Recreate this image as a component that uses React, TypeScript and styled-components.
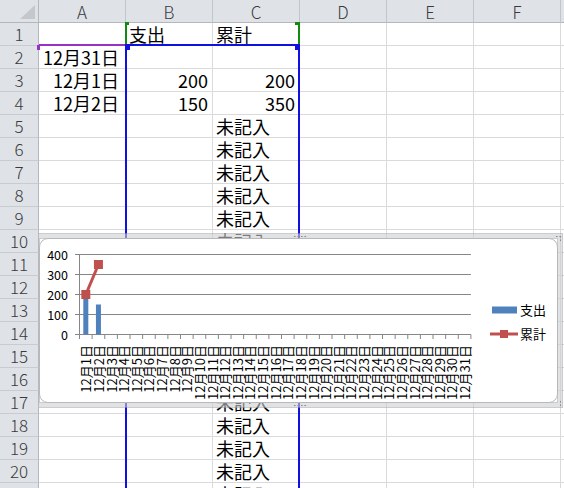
import React from "react";
import styled, { createGlobalStyle } from "styled-components";

const Global = createGlobalStyle`
  html, body { margin: 0; padding: 0; background: #fff; overflow: hidden; }
  #root { width: 564px; height: 488px; }
`;

const COL_W = 87;
const ROW_H = 23;
const HEAD_W = 39;
const COLS = ["A", "B", "C", "D", "E", "F", "G"];
const ROWS = 21;
const FONT = `"Noto Sans CJK JP", "Noto Sans", sans-serif`;

type CellData = { text: string; align: "left" | "right"; pad?: number };
const cells: Record<string, CellData> = {
  B1: { text: "支出", align: "left" },
  C1: { text: "累計", align: "left" },
  A2: { text: "12月31日", align: "right", pad: 6 },
  A3: { text: "12月1日", align: "right", pad: 6 },
  B3: { text: "200", align: "right" },
  C3: { text: "200", align: "right" },
  A4: { text: "12月2日", align: "right", pad: 6 },
  B4: { text: "150", align: "right" },
  C4: { text: "350", align: "right" },
};
for (let r = 5; r <= ROWS; r++) cells["C" + r] = { text: "未記入", align: "left" };

const Sheet = styled.div`
  position: relative;
  width: 564px;
  height: 488px;
  overflow: hidden;
  font-family: ${FONT};
  background: #fff;
`;

const Grid = styled.div`
  display: grid;
  grid-template-columns: ${HEAD_W}px repeat(${COLS.length}, ${COL_W}px);
  grid-auto-rows: ${ROW_H}px;
`;

const HeadBase = styled.div`
  box-sizing: border-box;
  background: #dfe3e8;
  color: #3a3a3a;
  font-weight: 300;
  font-size: 17px;
  line-height: 20px;
  display: flex;
  align-items: center;
  justify-content: center;
`;

const Corner = styled(HeadBase)`
  position: relative;
  border-right: 1px solid #b3b8bd;
  border-bottom: 1px solid #b3b8bd;
`;

const SelectAll = styled.span`
  position: absolute;
  right: 3px;
  bottom: 3px;
  width: 15px;
  height: 14px;
  background: #c4c8cd;
  clip-path: polygon(100% 0, 100% 100%, 0 100%);
`;

const ColHead = styled(HeadBase)`
  border-right: 1px solid #c2c6cb;
  border-bottom: 1px solid #b3b8bd;
  padding-top: 1px;
`;

const RowHead = styled(HeadBase)`
  border-right: 1px solid #b3b8bd;
  border-bottom: 1px solid #c8ccd1;
`;

const Cell = styled.div<{ $align: "left" | "right"; $pad: number }>`
  box-sizing: border-box;
  display: flex;
  align-items: flex-end;
  justify-content: ${(p) => (p.$align === "right" ? "flex-end" : "flex-start")};
  border-right: 1px solid #dadada;
  border-bottom: 1px solid #dadada;
  font-size: 18px;
  line-height: 20px;
  color: #000;
  white-space: nowrap;
  padding: 0 ${(p) => p.$pad}px 1px;
`;

/* chart data range finder (lies over the cells) */
const BLUE = "#1010e0";
const GREEN = "#108a10";
const PURPLE = "#9a2fc8";

const Range = styled.div<{
  $c: string;
  $x: number;
  $y: number;
  $w: number;
  $h: number;
  $sides: string;
}>`
  position: absolute;
  left: ${(p) => p.$x}px;
  top: ${(p) => p.$y}px;
  width: ${(p) => p.$w}px;
  height: ${(p) => p.$h}px;
  box-sizing: border-box;
  border: 0 solid ${(p) => p.$c};
  border-width: ${(p) => p.$sides};
`;

const Handle = styled.span<{ $c: string; $side: "left" | "right"; $top: number; $w: number; $h: number }>`
  position: absolute;
  top: ${(p) => p.$top}px;
  ${(p) => p.$side}: -2px;
  width: ${(p) => p.$w}px;
  height: ${(p) => p.$h}px;
  background: ${(p) => p.$c};
`;

/* chart */
const ChartLayer = styled.div`
  position: absolute;
  left: 39px;
  top: 23px;
  right: 0;
  bottom: 0;
  overflow: hidden;
  pointer-events: none;
`;

const Frame = styled.div`
  position: absolute;
  left: -4px;
  top: 211px;
  width: 527px;
  height: 173px;
  box-sizing: border-box;
  border: 4px solid rgba(205, 207, 210, 0.6);
  box-shadow: 0 0 0 1px rgba(160, 162, 165, 0.55), inset 0 0 0 1px rgba(160, 162, 165, 0.55);
`;

const Grip = styled.span<{ $w: number; $h: number; $x: number; $y: number }>`
  position: absolute;
  left: ${(p) => p.$x}px;
  top: ${(p) => p.$y}px;
  width: ${(p) => p.$w}px;
  height: ${(p) => p.$h}px;
  background-image: radial-gradient(circle, #8c8c8c 0.8px, transparent 1.1px);
  background-size: 3.5px 3.5px;
`;

const ChartBox = styled.div`
  box-sizing: border-box;
  width: 100%;
  height: 100%;
  background: #fff;
  border: 1px solid #b8b8b8;
  border-radius: 9px;
  display: flex;
  align-items: center;
  overflow: hidden;
`;

const Plot = styled.svg`
  flex: none;
  display: block;
  font-family: ${FONT};
`;

const Legend = styled.div`
  display: flex;
  flex-direction: column;
  gap: 10px;
  margin-top: 3px;
`;

const LegendItem = styled.div`
  display: flex;
  align-items: center;
  height: 14px;
`;

const LegendLabel = styled.span`
  margin-left: 2px;
  font-size: 13px;
  line-height: 14px;
  color: #000;
`;

const X0 = 79.5;
const XW = (470.7 - 79.3) / 31;
const Y0 = 334.5;
const yOf = (v: number) => Y0 - v / 5;
const cx = (i: number) => X0 + (i - 0.5) * XW;
const XEND = X0 + 31 * XW;

const BAR = "#4f81bd";
const LINE = "#c0504d";

const bars = [200, 150];
const cum = [200, 350];

function Chart() {
  return (
    <Frame>
      <Grip $w={15} $h={3} $x={254} $y={-3.5} />
      <Grip $w={15} $h={3} $x={254} $y={166} />
      <Grip $w={7} $h={3} $x={516} $y={-3.5} />
      <Grip $w={3} $h={7} $x={520} $y={-3.5} />
      <Grip $w={3} $h={7} $x={520} $y={162} />
      <ChartBox>
        <Plot width={450} height={163} viewBox="40 239 450 163">
          {[0, 100, 200, 300, 400].map((v) => (
            <g key={v}>
              <line
                x1={75}
                x2={v === 0 ? X0 : XEND}
                y1={yOf(v)}
                y2={yOf(v)}
                stroke="#868686"
                strokeWidth={1}
              />
              <text
                x={68}
                y={yOf(v)}
                textAnchor="end"
                dominantBaseline="central"
                fontSize={12.5}
                fill="#000"
              >
                {v}
              </text>
            </g>
          ))}
          <line x1={X0} x2={X0} y1={yOf(400)} y2={Y0} stroke="#868686" />
          <line x1={X0} x2={XEND} y1={Y0} y2={Y0} stroke="#868686" />
          {Array.from({ length: 32 }, (_, i) => (
            <line
              key={i}
              x1={X0 + i * XW}
              x2={X0 + i * XW}
              y1={Y0}
              y2={Y0 + 4.5}
              stroke="#868686"
            />
          ))}
          {bars.map((v, i) => (
            <rect
              key={i}
              x={cx(i + 1) - 2.5}
              y={yOf(v)}
              width={5}
              height={Y0 - yOf(v)}
              fill={BAR}
            />
          ))}
          <polyline
            points={cum.map((v, i) => `${cx(i + 1)},${yOf(v)}`).join(" ")}
            fill="none"
            stroke={LINE}
            strokeWidth={3}
          />
          {cum.map((v, i) => (
            <rect
              key={i}
              x={cx(i + 1) - 4.5}
              y={yOf(v) - 4.5}
              width={9}
              height={9}
              fill={LINE}
            />
          ))}
          {Array.from({ length: 31 }, (_, i) => {
            const x = cx(i + 1);
            return (
              <text
                key={i}
                x={x}
                y={345}
                transform={`rotate(-90 ${x} 345)`}
                textAnchor="end"
                dominantBaseline="central"
                fontSize={13}
                fill="#000"
              >
                {`12月${i + 1}日`}
              </text>
            );
          })}
        </Plot>
        <Legend>
          <LegendItem>
            <svg width={28} height={14}>
              <rect x={2} y={3.5} width={25} height={7} fill={BAR} />
            </svg>
            <LegendLabel>支出</LegendLabel>
          </LegendItem>
          <LegendItem>
            <svg width={28} height={14}>
              <line x1={0} x2={28} y1={7} y2={7} stroke={LINE} strokeWidth={3} />
              <rect x={10} y={3} width={8} height={8} fill={LINE} />
            </svg>
            <LegendLabel>累計</LegendLabel>
          </LegendItem>
        </Legend>
      </ChartBox>
    </Frame>
  );
}

export default function App() {
  const gridCells: React.ReactNode[] = [];
  gridCells.push(
    <Corner key="corner">
      <SelectAll />
    </Corner>
  );
  COLS.forEach((c) => gridCells.push(<ColHead key={"h" + c}>{c}</ColHead>));
  for (let r = 1; r <= ROWS; r++) {
    gridCells.push(<RowHead key={"r" + r}>{r}</RowHead>);
    COLS.forEach((c) => {
      const d = cells[c + r];
      gridCells.push(
        <Cell
          key={c + r}
          $align={d ? d.align : "left"}
          $pad={d?.pad ?? (d?.align === "right" ? 4 : 3)}
        >
          {d ? d.text : ""}
        </Cell>
      );
    });
  }

  return (
    <>
      <Global />
      <Sheet>
        <Grid>{gridCells}</Grid>
        {/* series names B1:C1 */}
        <Range $c={GREEN} $x={125} $y={23} $w={175} $h={22} $sides="0 2px">
          <Handle $c={GREEN} $side="left" $top={-1} $w={4} $h={3} />
          <Handle $c={GREEN} $side="right" $top={-1} $w={5} $h={3} />
        </Range>
        {/* categories A2:A… */}
        <Range $c={PURPLE} $x={39} $y={44} $w={88} $h={444} $sides="2px 0 0">
          <Handle $c={PURPLE} $side="left" $top={-1} $w={3} $h={5} />
        </Range>
        {/* values B2:C… */}
        <Range $c={BLUE} $x={125} $y={44} $w={175} $h={444} $sides="2px 2px 0">
          <Handle $c={BLUE} $side="left" $top={-1} $w={5} $h={5} />
          <Handle $c={BLUE} $side="right" $top={-1} $w={5} $h={5} />
        </Range>
        <ChartLayer>
          <Chart />
        </ChartLayer>
      </Sheet>
    </>
  );
}
